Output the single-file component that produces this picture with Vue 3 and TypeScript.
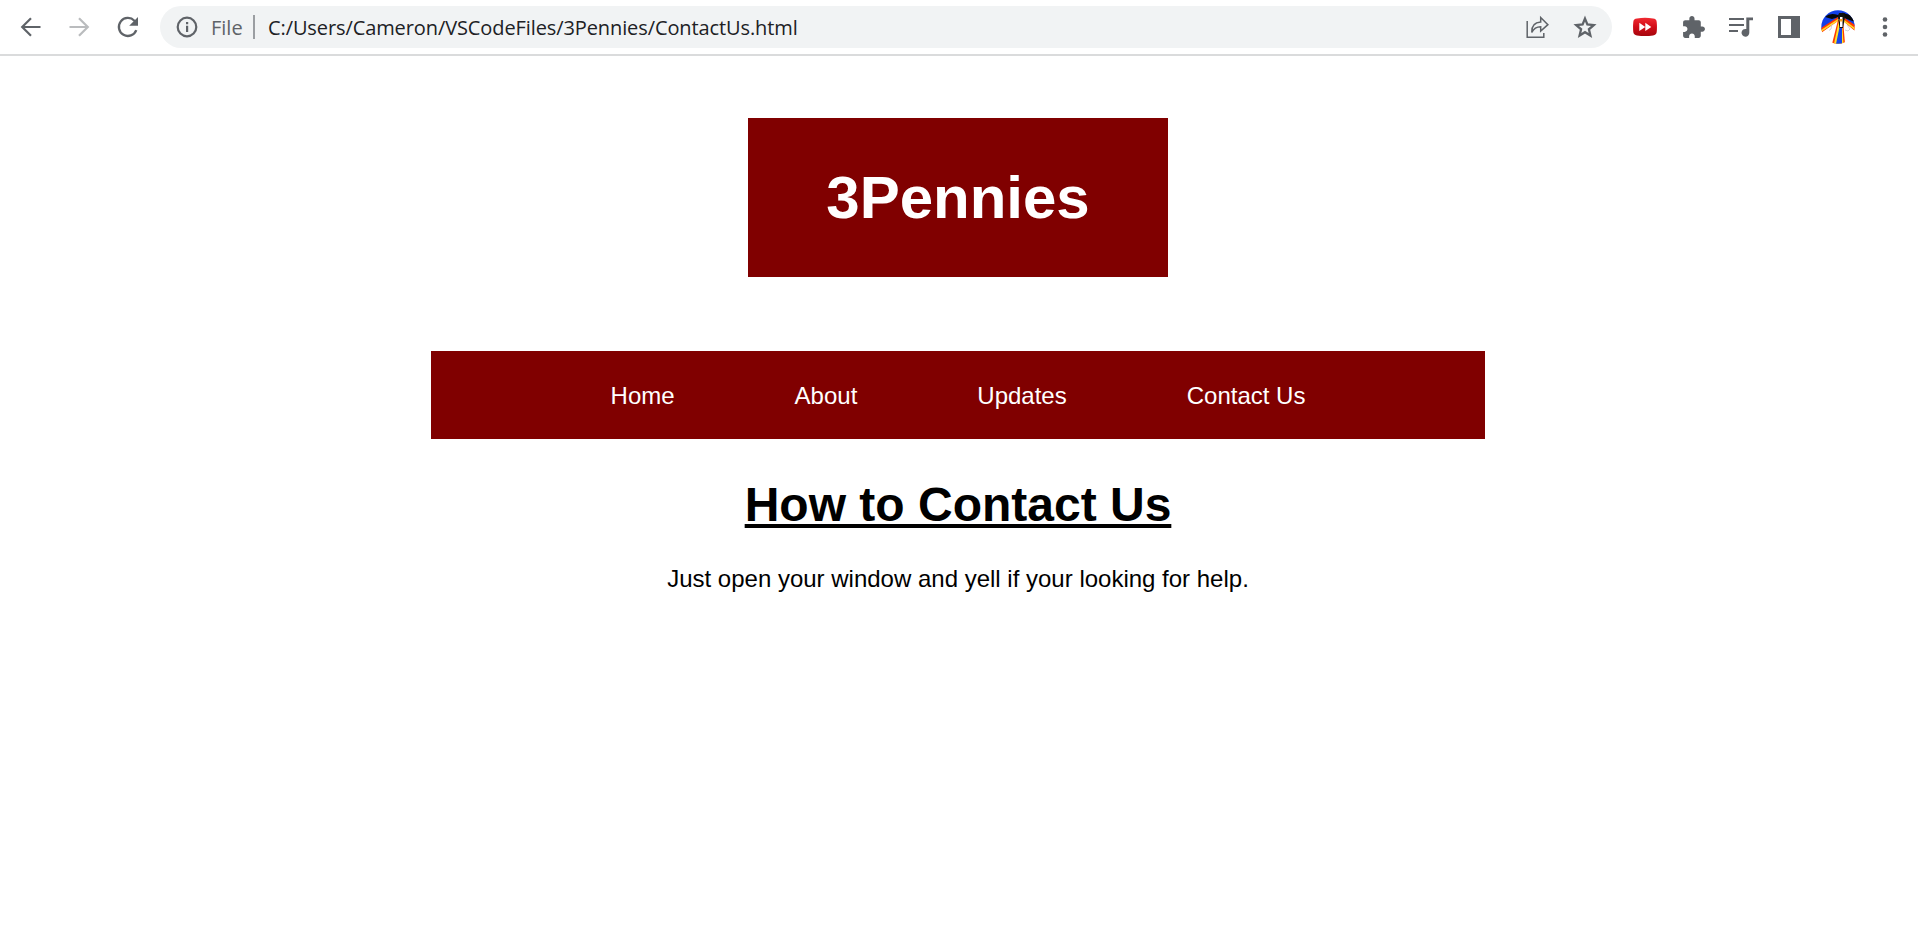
<script setup lang="ts">
const address = 'C:/Users/Cameron/VSCodeFiles/3Pennies/ContactUs.html'
const links: string[] = ['Home', 'About', 'Updates', 'Contact Us']
</script>

<template>
  <div class="window">
    <header class="toolbar">
      <div class="history">
        <svg class="icon" viewBox="0 0 24 24"><path d="M21.500 12H3.500M12 3.200 3.200 12l8.800 8.800" fill="none" stroke="#5f6368" stroke-width="2.200" /></svg>
        <svg class="icon" viewBox="0 0 24 24"><path d="M2.500 12h18M12 3.200l8.800 8.800-8.800 8.800" fill="none" stroke="#babcbe" stroke-width="2.200" /></svg>
        <svg class="icon reload" viewBox="0 0 24 24"><path d="M20.300 15.200A9 9 0 1 1 18.400 5.700L20 7.400" fill="none" stroke="#5f6368" stroke-width="2.300" /><path d="M22 2v8.800h-8.800z" fill="#5f6368" /></svg>
      </div>
      <div class="omnibox">
        <svg class="info" viewBox="0 0 22 22"><circle cx="11" cy="11" r="9.300" fill="none" stroke="#5f6368" stroke-width="2.200" /><path d="M10 9.800h2.200V16H10zM10 6h2.200v2.200H10z" fill="#5f6368" /></svg>
        <span class="scheme">File</span>
        <span class="divider"></span>
        <span class="address">{{ address }}</span>
        <svg class="share" viewBox="0 0 24 24"><path d="M1.200 6v16.200h16.600V18M5.800 17.500C5.500 10.500 9 7.400 14.700 7.100V2.500l7.200 7.100-7.200 6.400v-4.300c-4.500 0-7 1.800-8.900 5.800z" fill="none" stroke="#5f6368" stroke-width="1.500" /></svg>
        <svg class="star" viewBox="0 0 24 24"><path d="M12 4.200l2.200 5.500 5.900.5-4.500 3.900 1.400 5.800-5-3.100L7 19.900l1.400-5.800-4.500-3.900 5.900-.5z" fill="none" stroke="#5f6368" stroke-width="2.100" /></svg>
      </div>
      <div class="actions">
        <svg class="forward" viewBox="0 0 24 20">
          <defs><linearGradient id="red" x1="0" y1="0" x2="0" y2="1"><stop offset="0" stop-color="#f02a31" /><stop offset=".5" stop-color="#d10c17" /><stop offset="1" stop-color="#a5060d" /></linearGradient></defs>
          <path d="M4 1.600Q12 .1 20 1.600 23.500 2 23.700 5q.5 5 0 10-.2 3-3.700 3.400-8 1.200-16 0Q.5 18 .3 15-.2 10 .3 5 .5 2 4 1.600z" fill="url(#red)" /><path d="M6.300 5.700l6 4.200-6 4.200zM12.300 5.700l6 4.200-6 4.200z" fill="#fff" />
        </svg>
        <svg class="puzzle" viewBox="0 0 24 24"><path d="M20.5 11H19V7c0-1.1-.9-2-2-2h-4V3.5C13 2.120 11.880 1 10.500 1S8 2.120 8 3.500V5H4C2.900 5 2 5.900 2 7v3.800h1.500c1.500 0 2.700 1.200 2.700 2.700S5 16.200 3.500 16.200H2V20c0 1.100.9 2 2 2h3.800v-1.500c0-1.500 1.200-2.700 2.700-2.700s2.700 1.200 2.700 2.700V22H17c1.100 0 2-.9 2-2v-4h1.500c1.380 0 2.500-1.120 2.500-2.500S21.880 11 20.500 11z" fill="#5f6368" /></svg>
        <svg class="music" viewBox="0 0 24 20"><path d="M0 2h15M0 8h15M0 14h9" stroke="#5f6368" stroke-width="2" /><path d="M17.300.5H24v2.800h-3.700v12.200a3.900 3.900 0 1 1-3-3.500z" fill="#5f6368" /></svg>
        <svg class="panel" viewBox="0 0 22 22"><path d="M0 0h22v22H0zM3 3v16h10V3z" fill="#5f6368" fill-rule="evenodd" /></svg>
        <svg class="avatar" viewBox="0 0 34 34">
          <defs><clipPath id="disc"><circle cx="17" cy="17" r="16.700" /></clipPath></defs>
          <g clip-path="url(#disc)">
            <path d="M0 0h34v34H0z" fill="#fff" />
            <path d="M0 0h34v16L20 7 0 20z" fill="#123fe8" />
            <path d="M4 7Q9 2 17 5q4-4 8-1 6 0 9 8l-11-4-5-1-7 2z" fill="#080808" />
            <path d="M17 7L0 18v5l17-12zM22 7l12 8v6L22 11z" fill="#ff3a00" />
            <path d="M17 9L0 20v2l17-11zM22 9l12 9v2L22 11z" fill="#ffd928" />
            <path d="M17 10l-6 24h13L22 10z" fill="#ff3d00" />
            <path d="M18 10l-5 24h9.500L21 10z" fill="#ffe32a" />
            <path d="M18.500 17l-3.500 17h6V17z" fill="#1745ea" />
            <path d="M18 3h5l1 4-2 11h-3.500L17 7z" fill="#111" />
            <path d="M19 7h2.500v10H19z" fill="#fff" /><path d="M18.500 9h3v2.500h-3z" fill="#f7a52a" />
            <path d="M11 14l-1 5-2 1.500M26 15l3 4-2 2-3-1" fill="none" stroke="#c9c9c9" stroke-width=".8" />
          </g>
        </svg>
        <svg class="menu" viewBox="0 0 6 22"><circle cx="3" cy="3.500" r="2.300" fill="#5f6368" /><circle cx="3" cy="11" r="2.300" fill="#5f6368" /><circle cx="3" cy="18.500" r="2.300" fill="#5f6368" /></svg>
      </div>
    </header>
    <main class="page">
      <h1 class="brand">3Pennies</h1>
      <nav class="nav">
        <a v-for="link in links" :key="link">{{ link }}</a>
      </nav>
      <h2 class="title">How to Contact Us</h2>
      <p class="copy">Just open your window and yell if your looking for help.</p>
    </main>
  </div>
</template>

<style>
body { margin: 0; background: #fff; }
</style>

<style scoped>
.window { height: 950px; overflow: hidden; background: #fff; font-family: "Liberation Sans", Arial, sans-serif; }
.toolbar { box-sizing: border-box; height: 56px; padding-top: 6px; display: flex; align-items: flex-start; border-bottom: 2px solid #dadbdc; }
svg { display: block; flex: none; }
.history { width: 160px; height: 42px; box-sizing: border-box; padding-left: 19px; display: flex; align-items: center; gap: 24px; }
.icon { width: 24px; height: 24px; }
.reload { margin-left: 1px; }
.omnibox { box-sizing: border-box; width: 1452px; height: 42px; padding: 0 14px 0 16px; display: flex; align-items: center; border-radius: 21px; background: #f1f3f4; font-family: "Open Sans", "Noto Sans", sans-serif; font-size: 20px; white-space: nowrap; }
.info { width: 22px; height: 22px; }
.scheme { width: 42px; margin-left: 13px; color: #5f6368; }
.divider { width: 2px; height: 24px; background: #9b9ea2; }
.address { flex: 1; margin-left: 13px; color: #202124; letter-spacing: -0.1px; }
.share { width: 24px; height: 24px; margin-right: 22px; }
.star { width: 26px; height: 26px; }
.actions { flex: 1; height: 42px; display: flex; align-items: center; }
.forward { width: 24px; height: 20px; margin-left: 21px; }
.puzzle { width: 25px; height: 25px; margin-left: 24px; }
.music { width: 24px; height: 20px; margin-left: 23px; }
.panel { width: 22px; height: 22px; margin-left: 25px; }
.avatar { width: 34px; height: 34px; margin-left: 21px; }
.menu { width: 6px; height: 22px; margin-left: 27px; }
.page { display: flex; flex-direction: column; align-items: center; padding-top: 62px; padding-right: 2px; }
.brand { box-sizing: border-box; width: 420px; height: 159px; margin: 0; background: #800000; color: #fff; font-size: 60px; line-height: 159px; text-align: center; }
.nav { box-sizing: border-box; width: 1054px; height: 88px; padding-top: 1px; margin-top: 74px; display: flex; align-items: center; justify-content: center; gap: 120px; background: #800000; color: #fff; font-size: 24px; }
.title { margin: 39px 0 0; font-size: 48px; line-height: 54px; text-decoration: underline; text-decoration-thickness: 4px; text-underline-offset: 3px; text-decoration-skip-ink: none; color: #000; }
.copy { margin: 33px 0 0; font-size: 24px; line-height: 28px; color: #000; }
</style>
